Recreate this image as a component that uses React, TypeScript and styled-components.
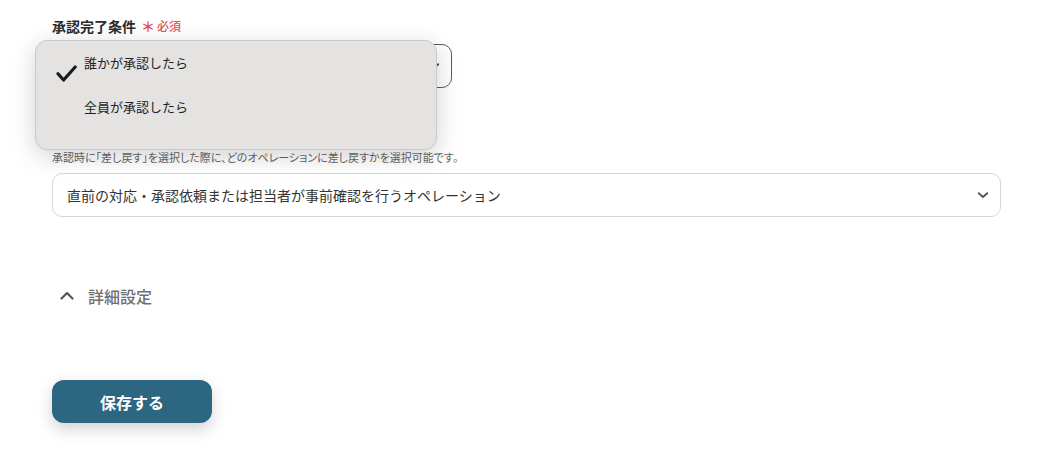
import React from "react";
import styled, { createGlobalStyle } from "styled-components";

const Global = createGlobalStyle`
  html, body { margin: 0; padding: 0; background: #ffffff; }
  body {
    font-family: "Noto Sans CJK JP", "Noto Sans", sans-serif;
    color: #333;
    -webkit-font-smoothing: antialiased;
  }
`;

const Page = styled.div`
  width: 1044px;
  height: 452px;
  box-sizing: border-box;
  padding: 16px 43px 0 52px;
  display: flex;
  flex-direction: column;
  overflow: hidden;
`;

const Field = styled.div<{ $mt?: number }>`
  display: flex;
  flex-direction: column;
  margin-top: ${(p) => p.$mt ?? 0}px;
`;

const Label = styled.div`
  display: flex;
  align-items: center;
  gap: 5px;
  font-size: 14px;
  font-weight: 700;
  line-height: 20px;
  color: #2b2b2b;
`;

const Required = styled.span`
  font-size: 12px;
  font-weight: 500;
  color: #e2535b;
  display: inline-flex;
  align-items: center;
  gap: 2px;
`;

const Star = styled.span`
  font-size: 14px;
  font-weight: 700;
`;

const Description = styled.div`
  margin-top: 11px;
  font-size: 11px;
  line-height: 16px;
  color: #666;
  font-feature-settings: "palt";
`;

const SelectWrap = styled.div<{ $w?: string; $mt: number }>`
  position: relative;
  width: ${(p) => p.$w ?? "100%"};
  margin-top: ${(p) => p.$mt}px;
`;

const SelectBox = styled.div<{ $dark?: boolean }>`
  box-sizing: border-box;
  height: 44px;
  border: 1px solid ${(p) => (p.$dark ? "#5a5a5a" : "#d6d6d6")};
  border-radius: 10px;
  display: flex;
  align-items: center;
  justify-content: space-between;
  padding: 0 11px 0 14px;
  font-size: 14px;
  color: #333;
  background: #fff;
`;

const Popup = styled.div`
  position: absolute;
  top: -4px;
  left: -17px;
  width: 402px;
  box-sizing: border-box;
  padding: 12px 0 8px;
  background: #e4e3e2;
  border: 1px solid #c9c9c9;
  border-radius: 12px;
  box-shadow: 0 6px 24px rgba(0, 0, 0, 0.18);
  z-index: 10;
`;

const Option = styled.div`
  height: 44px;
  display: flex;
  align-items: flex-start;
  padding-left: 20px;
  gap: 7px;
  font-size: 13px;
  line-height: 20px;
  color: #222;
`;

const CheckSlot = styled.div`
  width: 21px;
  height: 17px;
  margin-top: 12px;
  flex-shrink: 0;
`;

const Collapse = styled.div`
  margin-top: 67px;
  height: 24px;
  display: flex;
  align-items: center;
  gap: 14px;
  padding-left: 8px;
  font-size: 16px;
  font-weight: 500;
  color: #6f6f6f;
`;

const SaveButton = styled.button`
  margin-top: 72px;
  width: 160px;
  height: 43px;
  border: none;
  border-radius: 12px;
  background: #2d6680;
  color: #fff;
  font-family: "Noto Sans CJK JP", "Noto Sans", sans-serif;
  font-size: 16px;
  font-weight: 700;
  box-shadow: 0 6px 16px rgba(0, 0, 0, 0.18);
  cursor: pointer;
`;

const Chevron = ({ up, color = "#555", size = 12 }: { up?: boolean; color?: string; size?: number }) => (
  <svg width={size} height={size * 0.65} viewBox="0 0 14 9" fill="none">
    <path
      d={up ? "M1.5 7.5 L7 2 L12.5 7.5" : "M2 2.5 L7 7 L12 2.5"}
      stroke={color}
      strokeWidth={2.2}
      strokeLinecap="round"
      strokeLinejoin="round"
    />
  </svg>
);

const Check = () => (
  <svg width="21" height="17" viewBox="0 0 21 17" fill="none">
    <path
      d="M2 8.8 L7.6 15 L19.2 2"
      stroke="#1a1a1a"
      strokeWidth="3.2"
      strokeLinecap="round"
      strokeLinejoin="round"
    />
  </svg>
);

export default function App() {
  return (
    <>
      <Global />
      <Page>
        <Field>
          <Label>
            承認完了条件
            <Required>
              <Star>＊</Star>必須
            </Required>
          </Label>
          <SelectWrap $w="400px" $mt={8}>
            <SelectBox $dark>
              <span />
              <Chevron />
            </SelectBox>
            <Popup>
              <Option>
                <CheckSlot>
                  <Check />
                </CheckSlot>
                誰かが承認したら
              </Option>
              <Option>
                <CheckSlot />
                全員が承認したら
              </Option>
            </Popup>
          </SelectWrap>
        </Field>

        <Field $mt={30}>
          <Label>差し戻し先</Label>
          <Description>
            承認時に「差し戻す」を選択した際に、どのオペレーションに差し戻すかを選択可能です。
          </Description>
          <SelectWrap $mt={8}>
            <SelectBox>
              <span>直前の対応・承認依頼または担当者が事前確認を行うオペレーション</span>
              <Chevron />
            </SelectBox>
          </SelectWrap>
        </Field>

        <Collapse>
          <Chevron up color="#555" size={14} />
          詳細設定
        </Collapse>

        <SaveButton>保存する</SaveButton>
      </Page>
    </>
  );
}
